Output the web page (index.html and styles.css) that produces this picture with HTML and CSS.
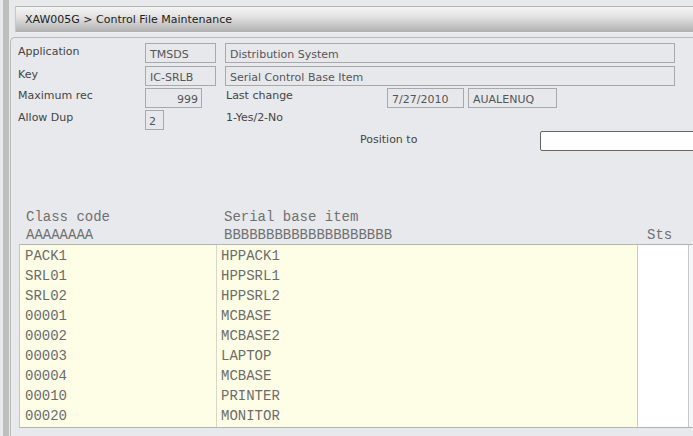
FILE: index.html
```html
<!DOCTYPE html>
<html>
<head>
<meta charset="utf-8">
<link rel="stylesheet" href="styles.css">
</head>
<body>
<div class="app">
  <div class="strip"></div>
  <div class="main">
    <div class="titlebar"><span class="title">XAW005G &gt; Control File Maintenance</span></div>
    <div class="panel">
      <div class="row">
        <span class="label">Application</span>
        <span class="field w-code">TMSDS</span>
        <span class="field w-desc">Distribution System</span>
      </div>
      <div class="row">
        <span class="label">Key</span>
        <span class="field w-code">IC-SRLB</span>
        <span class="field w-desc">Serial Control Base Item</span>
      </div>
      <div class="row tight">
        <span class="label lower">Maximum rec</span>
        <span class="field w-num">999</span>
        <span class="label2">Last change</span>
        <span class="field w-date">7/27/2010</span>
        <span class="field w-user">AUALENUQ</span>
      </div>
      <div class="row tight">
        <span class="label lower">Allow Dup</span>
        <span class="field w-dup">2</span>
        <span class="label2 after-dup">1-Yes/2-No</span>
      </div>
      <div class="row pos-row">
        <span class="pos-label">Position to</span>
        <span class="pos-input"></span>
      </div>
      <div class="grid-head">
        <div class="hcol c1"><div>Class code</div><div>AAAAAAAA</div></div>
        <div class="hcol c2"><div>Serial base item</div><div>BBBBBBBBBBBBBBBBBBBB</div></div>
        <div class="hcol c3"><div>&nbsp;</div><div>Sts</div></div>
      </div>
      <div class="grid">
        <div class="gcol c1 yellow">
          <div>PACK1</div><div>SRL01</div><div>SRL02</div><div>00001</div><div>00002</div><div>00003</div><div>00004</div><div>00010</div><div>00020</div>
        </div>
        <div class="gcol c2 yellow">
          <div>HPPACK1</div><div>HPPSRL1</div><div>HPPSRL2</div><div>MCBASE</div><div>MCBASE2</div><div>LAPTOP</div><div>MCBASE</div><div>PRINTER</div><div>MONITOR</div>
        </div>
        <div class="gcol c3 white"></div>
        <div class="gcol c4"></div>
      </div>
    </div>
  </div>
</div>
</body>
</html>
```
FILE: styles.css
```css
html, body {
  margin: 0;
  padding: 0;
}
body {
  width: 693px;
  height: 436px;
  overflow: hidden;
  background: #e8e9ec;
  font-family: "DejaVu Sans", Verdana, sans-serif;
  font-size: 11px;
  color: #444;
}
.app {
  display: flex;
  height: 436px;
}
.strip {
  width: 6px;
  margin-left: 3px;
  background: #bcbfbc;
  flex: none;
}
.main {
  flex: 1;
  min-width: 0;
  padding-left: 1px;
  background: #e8e9ec;
  overflow: hidden;
}
.titlebar {
  margin-top: 6px;
  margin-left: 5px;
  height: 25px;
  border-top: 1px solid #b4b4b4;
  border-left: 1px solid #c8c8c8;
  background: linear-gradient(to bottom, #f4f4f4 0%, #e2e2e2 40%, #b0b0b0 100%);
  display: flex;
  align-items: center;
  padding-left: 9px;
  border-bottom: 1px solid #f0f0f0;
}
.title {
  font-size: 11px;
  color: #222;
}
.panel {
  margin-top: 4px;
  border: 1px solid #b9b9b9;
  border-right: none;
  border-radius: 5px 0 0 0;
  padding: 5px 0 0 7px;
  height: 400px;
  box-sizing: border-box;
  background: #e8e9ed;
}
.row {
  display: flex;
  align-items: center;
  height: 20px;
  margin-bottom: 3px;
}
.row.tight {
  margin-top: -1px;
}
.label {
  width: 127px;
  flex: none;
  margin-top: -1px;
  align-self: flex-start;
  line-height: 20px;
}
.label.lower {
  margin-top: -2px;
}
.label2 {
  width: 161px;
  flex: none;
  margin-left: 24px;
  align-self: flex-start;
  line-height: 18px;
  margin-top: -1px;
}
.label2.after-dup {
  margin-left: 62px;
}
.field {
  flex: none;
  box-sizing: border-box;
  height: 20px;
  border: 1px solid #a9a9a9;
  background: #e7e8ec;
  padding: 3px 4px 0;
  line-height: 15px;
  color: #555;
  white-space: nowrap;
  overflow: hidden;
}
.w-code { width: 71px; }
.w-desc { width: 450px; margin-left: 9px; }
.w-num { width: 57px; text-align: right; padding-right: 3px; }
.w-date { width: 77px; }
.w-user { width: 89px; margin-left: 4px; }
.w-dup { width: 19px; padding: 3px 3px 0; }
.pos-row {
  margin-top: -2px;
  height: 20px;
}
.pos-label {
  margin-left: 342px;
  width: 180px;
  flex: none;
  align-self: flex-start;
  line-height: 14px;
  margin-top: 2px;
}
.pos-input {
  flex: none;
  width: 200px;
  height: 20px;
  box-sizing: border-box;
  border: 1px solid #666;
  border-radius: 2px;
  background: #fff;
}
.grid-head {
  display: flex;
  margin-top: 57px;
  margin-left: 1px;
  font-family: "Liberation Mono", "Courier New", monospace;
  font-size: 14px;
  color: #707070;
  line-height: 18px;
}
.hcol { flex: none; padding-left: 7px; box-sizing: border-box; }
.hcol.c2 { padding-left: 7px; }
.hcol.c3 { padding-left: 10px; }
.c1 { width: 198px; }
.c2 { width: 420px; }
.c3 { width: 51px; }
.grid {
  display: flex;
  margin-left: 1px;
  border-top: 1px solid #b4b4b4;
  border-bottom: 1px solid #b4b4b4;
  border-left: 1px solid #c4c4c4;
  font-family: "Liberation Mono", "Courier New", monospace;
  font-size: 14px;
  color: #6c6c6c;
  height: 184px;
  box-sizing: border-box;
}
.gcol {
  flex: none;
  padding-left: 5px;
  padding-top: 1px;
  box-sizing: border-box;
  line-height: 20px;
}
.gcol.c1 { width: 197px; border-right: 1px solid #d8d8c8; }
.gcol.c2 { width: 421px; padding-left: 4px; border-right: 1px solid #c8c8c8; }
.gcol.c3 { width: 51px; border-right: 1px solid #c8c8c8; }
.gcol.c4 { flex: 1; background: #f5f6f7; }
.yellow { background: #fefee6; }
.white { background: #ffffff; }
```
